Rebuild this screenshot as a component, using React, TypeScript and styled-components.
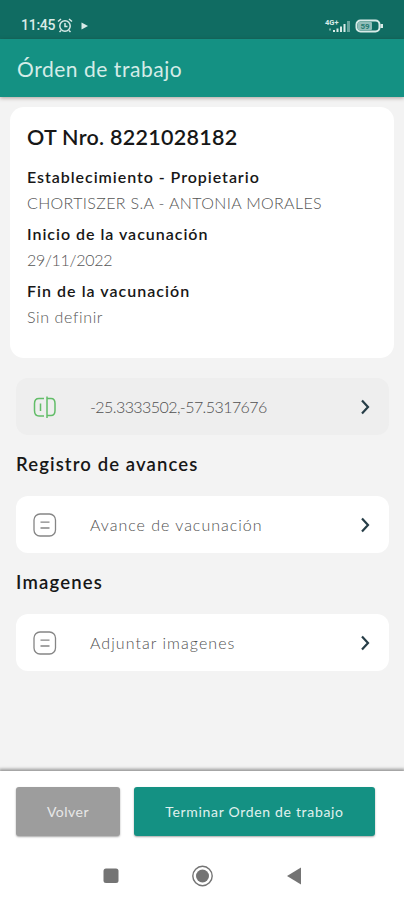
import React from "react";
import styled, { createGlobalStyle } from "styled-components";

const GlobalStyle = createGlobalStyle`
  * { box-sizing: border-box; }
  body { margin: 0; background: #f3f3f3; font-family: Lato, "Open Sans", sans-serif; }
`;

const Screen = styled.div`
  width: 404px;
  height: 900px;
  display: flex;
  flex-direction: column;
  overflow: hidden;
  background: #f3f3f3;
`;

const StatusBar = styled.div`
  flex: none;
  height: 39px;
  padding: 11px 20px 0 21px;
  display: flex;
  justify-content: space-between;
  background: #106c62;
  color: #d9ebe8;
`;

const StatusGroup = styled.div`
  display: flex;
  align-items: center;
  height: 29px;
`;

const Clock = styled.span`
  font: 500 14px/29px Roboto, sans-serif;
  letter-spacing: -0.25px;
`;

const AppBar = styled.header`
  flex: none;
  height: 58px;
  padding-left: 17px;
  background: #149183;
  box-shadow: 0 1px 4px rgba(60, 30, 20, 0.4);
  z-index: 1;
`;

const Title = styled.h1`
  margin: 0;
  font-size: 21px;
  font-weight: 400;
  line-height: 59px;
  color: #d5ece8;
  letter-spacing: 0.54px;
  white-space: nowrap;
`;

const Content = styled.main`
  flex: 1;
  display: flex;
  flex-direction: column;
  padding: 10px 15px 0 16px;
`;

const Card = styled.section`
  flex: none;
  height: 251px;
  margin: 0 -5px 20px -6px;
  padding: 15px 17px 0;
  border-radius: 14px;
  background: #fff;
`;

const OrderNumber = styled.h2`
  margin: 0 0 9px;
  font-size: 21.5px;
  font-weight: 600;
  line-height: 30px;
  color: #171717;
  letter-spacing: 0.27px;
  white-space: nowrap;
`;

const Fields = styled.dl`
  margin: 0;
`;

const Label = styled.dt<{ $ls: number }>`
  font-size: 16px;
  font-weight: 600;
  line-height: 31px;
  color: #171717;
  letter-spacing: ${(p) => p.$ls}px;
  white-space: nowrap;
`;

const Value = styled.dd<{ $ls: number }>`
  margin: 0;
  font-size: 16px;
  font-weight: 300;
  line-height: 21px;
  padding-bottom: 5px;
  color: #555;
  letter-spacing: ${(p) => p.$ls}px;
  white-space: nowrap;
`;

const Row = styled.div<{ $muted?: boolean }>`
  flex: none;
  height: 57px;
  padding: 1px 16px 0 17px;
  display: flex;
  align-items: center;
  border-radius: 12px;
  background: ${(p) => (p.$muted ? "#eeeeee" : "#fff")};
  svg { flex: none; }
`;

const RowText = styled.span<{ $ls: number }>`
  flex: 1;
  padding: 0 0 0 33px;
  font-size: 16px;
  font-weight: 300;
  line-height: 24px;
  color: #505050;
  letter-spacing: ${(p) => p.$ls}px;
  white-space: nowrap;
`;

const Heading = styled.h3<{ $ls: number }>`
  margin: 15px 0 18px;
  font-size: 18.5px;
  font-weight: 600;
  line-height: 28px;
  color: #171717;
  letter-spacing: ${(p) => p.$ls}px;
  white-space: nowrap;
`;

const Footer = styled.footer`
  flex: none;
  height: 129px;
  background: #fff;
  box-shadow: 0 -1px 3px 1px rgba(0, 0, 0, 0.38);
`;

const Actions = styled.div`
  display: flex;
  gap: 14px;
  padding: 16px 29px 0 16px;
`;

const Button = styled.button<{ $main?: boolean; $ls: number }>`
  flex: ${(p) => (p.$main ? "1" : "0 0 104px")};
  height: 49px;
  padding: 0;
  border: 0;
  border-radius: 3px;
  background: ${(p) => (p.$main ? "#149183" : "#9d9d9d")};
  box-shadow: 0 1px 2px rgba(0, 0, 0, 0.35);
  color: ${(p) => (p.$main ? "#e0f1ef" : "#e8e8e8")};
  font: 400 14px/20px Lato, sans-serif;
  letter-spacing: ${(p) => p.$ls}px;
  white-space: nowrap;
`;

const SystemNav = styled.nav`
  display: flex;
  justify-content: space-between;
  align-items: center;
  height: 24px;
  margin-top: 28px;
  padding: 0 98px 0 99px;
`;

const Chevron = () => (
  <svg width="16" height="20" viewBox="0 0 16 20" fill="none" stroke="#263d47" strokeWidth="2.2">
    <path d="M5 3.5 11 10 5 16.5" />
  </svg>
);

const NoteIcon = () => (
  <svg width="24" height="24" viewBox="0 0 24 24" fill="none" stroke="#858585" strokeWidth="1.3">
    <rect x="1" y="1" width="21.5" height="22" rx="6" />
    <path d="M7.5 9.2h9M7.5 15h9" />
  </svg>
);

const PlaceIcon = () => (
  <svg width="24" height="24" viewBox="0 0 24 24" fill="none" stroke="#62bd68" strokeWidth="1.5">
    <path d="M11 3.5H6Q1.5 3.5 1.5 8.5v7Q1.5 21 6 21H11M14 1.5V23M14 3.5h4q4 0 4 5v7q0 5-4 5h-4M7.5 8.5V16" />
  </svg>
);

export default function App() {
  return (
    <Screen>
      <GlobalStyle />
      <StatusBar>
        <StatusGroup>
          <Clock>11:45</Clock>
          <svg width="34" height="18" viewBox="0 0 34 18" fill="none" stroke="#d9ebe8" strokeWidth="1.5">
            <circle cx="10" cy="9" r="5.2" />
            <path d="M3 4.5 6 2M17 4.5 14 2M10 6v3.5h2.5M6 13.5 4.5 15M14 13.5l1.5 1.5" />
            <path d="M26.5 5.5 33 9 26.5 12.5z" fill="#d9ebe8" stroke="none" />
          </svg>
        </StatusGroup>
        <StatusGroup>
          <svg width="60" height="18" viewBox="0 0 60 18" fill="#d9ebe8">
            <text x="1" y="7.5" fontFamily="Roboto, sans-serif" fontSize="7.5" fontWeight="700">4G+</text>
            <path d="M5 11.5h2v2H5z" opacity=".5" />
            <path d="M9 13h2v2H9zM12.5 11.5h2V15h-2zM16 9.5h2V15h-2zM19.5 7h2v8h-2z" />
            <path d="M23 4h3v11h-3z" opacity=".45" />
            <rect x="32.5" y="3.5" width="23" height="11" rx="4" fill="none" stroke="#d9ebe8" strokeWidth="2" />
            <rect x="34" y="5" width="14" height="8" rx="1" opacity=".65" />
            <path d="M56.5 7H59v4h-2.5z" />
            <text x="36.5" y="12" fontFamily="Roboto, sans-serif" fontSize="8" fontWeight="700" fill="#287b72">59</text>
          </svg>
        </StatusGroup>
      </StatusBar>
      <AppBar>
        <Title>Órden de trabajo</Title>
      </AppBar>
      <Content>
        <Card>
          <OrderNumber>OT Nro. 8221028182</OrderNumber>
          <Fields>
            <Label $ls={0.95}>Establecimiento - Propietario</Label>
            <Value $ls={0.35}>CHORTISZER S.A - ANTONIA MORALES</Value>
            <Label $ls={0.98}>Inicio de la vacunación</Label>
            <Value $ls={-0.3}>29/11/2022</Value>
            <Label $ls={1.03}>Fin de la vacunación</Label>
            <Value $ls={0.62}>Sin definir</Value>
          </Fields>
        </Card>
        <Row $muted>
          <PlaceIcon />
          <RowText $ls={-0.57}>-25.3333502,-57.5317676</RowText>
          <Chevron />
        </Row>
        <Heading $ls={1.1}>Registro de avances</Heading>
        <Row>
          <NoteIcon />
          <RowText $ls={0.98}>Avance de vacunación</RowText>
          <Chevron />
        </Row>
        <Heading $ls={1.2}>Imagenes</Heading>
        <Row>
          <NoteIcon />
          <RowText $ls={1.05}>Adjuntar imagenes</RowText>
          <Chevron />
        </Row>
      </Content>
      <Footer>
        <Actions>
          <Button $ls={0.5}>Volver</Button>
          <Button $main $ls={0.68}>Terminar Orden de trabajo</Button>
        </Actions>
        <SystemNav>
          <svg width="24" height="24" viewBox="0 0 24 24"><rect x="4.5" y="4.5" width="15" height="14.5" rx="2.5" fill="#747474" /></svg>
          <svg width="24" height="24" viewBox="0 0 24 24"><circle cx="11.5" cy="12" r="9.7" fill="none" stroke="#747474" strokeWidth="1.4" /><circle cx="11.5" cy="12" r="6.5" fill="#747474" /></svg>
          <svg width="24" height="24" viewBox="0 0 24 24"><path d="M5 12 19 3.5v17z" fill="#747474" /></svg>
        </SystemNav>
      </Footer>
    </Screen>
  );
}
